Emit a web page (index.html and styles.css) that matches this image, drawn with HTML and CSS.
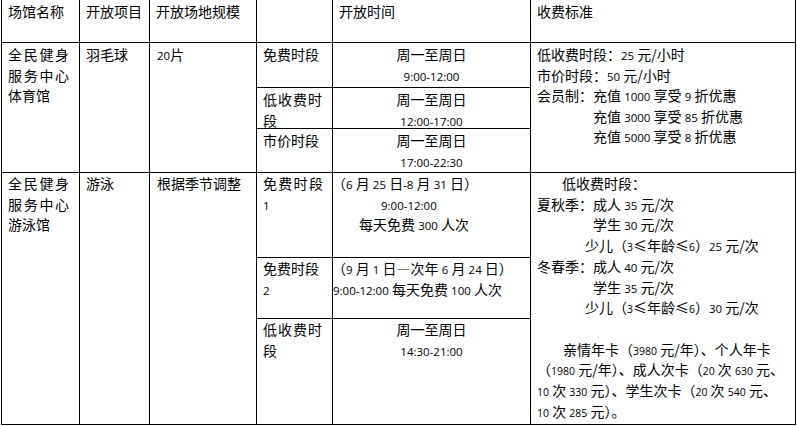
FILE: index.html
```html
<!DOCTYPE html>
<html lang="zh-CN">
<head>
<meta charset="utf-8">
<title>场馆开放信息</title>
<link rel="stylesheet" href="styles.css">
</head>
<body>
<div class="sheet">
  <div class="cell">场馆名称</div>
  <div class="cell">开放项目</div>
  <div class="cell">开放场地规模</div>
  <div class="cell"></div>
  <div class="cell">开放时间</div>
  <div class="cell">收费标准</div>

  <div class="cell span3"><span class="sp16">全民健身</span><br><span class="sp16">服务中心</span><br>体育馆</div>
  <div class="cell span3">羽毛球</div>
  <div class="cell span3 c3"><span class="n">20</span>片</div>
  <div class="cell">免费时段</div>
  <div class="cell ctr">周一至周日<br><span class="n">9:00-12:00</span></div>
  <div class="cell span3">
    <div>低收费时段：<span class="n">25</span> 元/小时</div>
    <div>市价时段：<span class="n">50</span> 元/小时</div>
    <div>会员制：充值 <span class="n">1000</span> 享受 <span class="n">9</span> 折优惠</div>
    <div class="ind56">充值 <span class="n">3000</span> 享受 <span class="n">85</span> 折优惠</div>
    <div class="ind56">充值 <span class="n">5000</span> 享受 <span class="n">8</span> 折优惠</div>
  </div>
  <div class="cell"><span class="sp11">低收费时</span><br>段</div>
  <div class="cell ctr">周一至周日<br><span class="n">12:00-17:00</span></div>
  <div class="cell">市价时段</div>
  <div class="cell ctr">周一至周日<br><span class="n">17:00-22:30</span></div>

  <div class="cell span3 r2"><span class="sp16">全民健身</span><br><span class="sp16">服务中心</span><br>游泳馆</div>
  <div class="cell span3 r2">游泳</div>
  <div class="cell span3 r2 c3">根据季节调整</div>
  <div class="cell r2"><span class="sp13">免费时段</span><br><span class="n">1</span></div>
  <div class="cell r2 tight">
    <div class="neg">（<span class="n">6</span> 月 <span class="n">25</span> 日<span class="n">-8</span> 月 <span class="n">31</span> 日）</div>
    <div class="ind48"><span class="n">9:00-12:00</span></div>
    <div class="ind26">每天免费 <span class="n">300</span> 人次</div>
  </div>
  <div class="cell span3 r2 fee">
    <div class="ind25">低收费时段：</div>
    <div>夏秋季：成人 <span class="n">35</span> 元/次</div>
    <div class="ind56">学生 <span class="n">30</span> 元/次</div>
    <div class="ind48">少儿（<span class="n2">3</span>≤年龄≤<span class="n2">6</span>）<span class="n">25</span> 元/次</div>
    <div>冬春季：成人 <span class="n">40</span> 元/次</div>
    <div class="ind56">学生 <span class="n">35</span> 元/次</div>
    <div class="ind48">少儿（<span class="n2">3</span>≤年龄≤<span class="n2">6</span>）<span class="n">30</span> 元/次</div>
    <div class="blank"></div>
    <div class="ind26">亲情年卡（<span class="n2">3980</span> 元/年）、个人年卡</div>
    <div>（<span class="n2">1980</span> 元/年）、成人次卡（<span class="n2">20</span> 次 <span class="n2">630</span> 元、</div>
    <div><span class="n2">10</span> 次 <span class="n2">330</span> 元）、学生次卡（<span class="n2">20</span> 次 <span class="n2">540</span> 元、</div>
    <div><span class="n2">10</span> 次 <span class="n2">285</span> 元）。</div>
  </div>
  <div class="cell r2">免费时段<br><span class="n">2</span></div>
  <div class="cell r2 tight">
    <div class="neg">（<span class="n">9</span> 月 <span class="n">1</span> 日—次年 <span class="n">6</span> 月 <span class="n">24</span> 日）</div>
    <div><span class="n">9:00-12:00</span> 每天免费 <span class="n">100</span> 人次</div>
  </div>
  <div class="cell r2"><span class="sp11">低收费时</span><br>段</div>
  <div class="cell r2 ctr">周一至周日<br><span class="n">14:30-21:00</span></div>
</div>
</body>
</html>
```
FILE: styles.css
```css
html, body {
  margin: 0;
  padding: 0;
  background: #ffffff;
}

body {
  font-family: "Noto Sans CJK SC", "Noto Sans", sans-serif;
  font-size: 14px;
  color: #000000;
}

.sheet {
  display: grid;
  grid-template-columns: 77px 69px 106px 75px 197px 264px;
  grid-template-rows: 42px 44px 40px 43px 84px 60px 105px;
  gap: 1px;
  padding: 1px;
  background: #000000;
  width: max-content;
  margin: -1px 0 0 1px;
}

.cell {
  background: #ffffff;
  padding: 1px 6px 0 6px;
  line-height: 20.5px;
  white-space: nowrap;
}

.span3 {
  grid-row: span 3;
}

.r2 {
  line-height: 20.7px;
  padding-top: 0;
}

.c3 {
  padding-left: 7px;
}

.tight {
  padding-left: 0;
}

.neg {
  margin-left: -1px;
}

.ctr {
  text-align: center;
}

.n {
  font-family: "Open Sans", "Liberation Sans", sans-serif;
  font-size: 11.5px;
  line-height: 1;
}

.n2 {
  font-family: "Open Sans", "Liberation Sans", sans-serif;
  font-size: 10.5px;
  line-height: 1;
}

.sp16 {
  letter-spacing: 1.7px;
}

.sp13 {
  letter-spacing: 1.3px;
}

.sp11 {
  letter-spacing: 1px;
}

.ind25 { padding-left: 25px; }
.ind26 { padding-left: 26px; }
.ind48 { padding-left: 48px; }
.ind56 { padding-left: 56px; }

.blank {
  height: 20.7px;
}
```
